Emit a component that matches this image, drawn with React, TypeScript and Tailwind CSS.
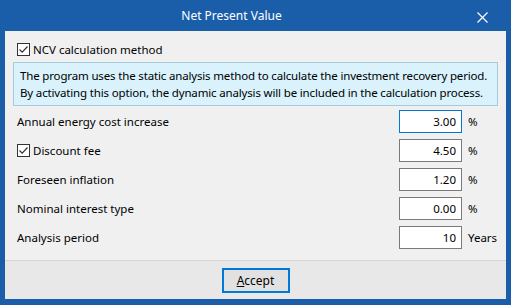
import React from "react";

const font = { fontFamily: '"Noto Sans", "Open Sans", sans-serif' };

function Check() {
  return (
    <span className="inline-flex w-[13px] h-[13px] border border-[#333333] bg-white items-center justify-center shrink-0">
      <svg width="11" height="11" viewBox="0 0 11 11">
        <path d="M1.5 5.5 L4.2 8.2 L9.5 2.5" fill="none" stroke="#333333" strokeWidth="1.2" />
      </svg>
    </span>
  );
}

const rows: { label: string; check?: boolean; value: string; unit: string; focus?: boolean }[] = [
  { label: "Annual energy cost increase", value: "3.00", unit: "%", focus: true },
  { label: "Discount fee", check: true, value: "4.50", unit: "%" },
  { label: "Foreseen inflation", value: "1.20", unit: "%" },
  { label: "Nominal interest type", value: "0.00", unit: "%" },
  { label: "Analysis period", value: "10", unit: "Years" },
];

export default function App() {
  return (
    <div className="w-[511px] h-[305px] bg-[#1a5ea9] flex flex-col text-[11.5px] text-black" style={font}>
      <div className="h-[31px] shrink-0 relative flex items-center justify-center pr-[48px] text-white text-[12px]">
        Net Present Value
        <svg className="absolute left-[477px] top-[12px]" width="11" height="11" viewBox="0 0 11 11">
          <path d="M0.5 0.5 L10.5 10.5 M10.5 0.5 L0.5 10.5" stroke="white" strokeWidth="1.2" />
        </svg>
      </div>
      <div className="mx-[5px] mb-[6px] flex-1 flex flex-col bg-[#f0f0f0]">
        <div className="flex-1 flex flex-col px-[8px]">
          <div className="h-[31px] flex items-end pb-[6px] pl-[4px] gap-[3px]">
            <Check />
            <span className="leading-[13px] whitespace-nowrap">NCV calculation method</span>
          </div>
          <div className="h-[44px] border border-[#a6cbdb] bg-[#d9f2fb] px-[6px] flex flex-col justify-center leading-[17px] whitespace-nowrap tracking-[-0.16px]">
            <div>The program uses the static analysis method to calculate the investment recovery period.</div>
            <div>By activating this option, the dynamic analysis will be included in the calculation process.</div>
          </div>
          <div className="flex flex-col gap-[6px] mt-[4px]">
            {rows.map((r) => (
              <div key={r.label} className="flex items-center h-[23px]">
                <div className="flex-1 pl-[4px] flex items-center gap-[3px] whitespace-nowrap">
                  {r.check && <Check />}
                  <span>{r.label}</span>
                </div>
                <div
                  className={
                    "w-[63px] h-[23px] bg-white border flex items-center justify-end pr-[5px] " +
                    (r.focus ? "border-[#0078d7]" : "border-[#7a7a7a]")
                  }
                >
                  {r.value}
                </div>
                <div className="w-[36px] pl-[6px]">{r.unit}</div>
              </div>
            ))}
          </div>
        </div>
        <div className="h-[39px] shrink-0 border-t border-[#d5d5d5] bg-[#e8e8e8] flex justify-center pt-[7px]">
          <div className="w-[68px] h-[25px] border-2 border-[#0078d7] bg-[#e1e1e1] flex items-center justify-center text-[12px]">
            <span>
              <span className="underline">A</span>ccept
            </span>
          </div>
        </div>
      </div>
    </div>
  );
}
